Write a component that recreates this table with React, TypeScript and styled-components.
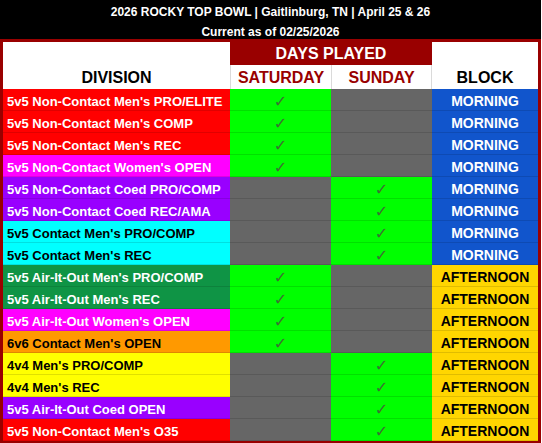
import styled, { createGlobalStyle } from 'styled-components'

const GlobalStyle = createGlobalStyle`
    body {
        margin: 0;
        background: #ffffff;
        font-family: 'Liberation Sans', Arial, sans-serif;
    }
`

type Day = 'sat' | 'sun'
type Block = 'MORNING' | 'AFTERNOON'

type Division = {
    name: string
    bg: string
    dark?: boolean
    day: Day
    block: Block
}

const RED = '#ff0000'
const MAGENTA = '#ff00ff'
const PURPLE = '#9900ff'
const CYAN = '#00ffff'
const GREEN = '#0f9445'
const ORANGE = '#ff9900'
const YELLOW = '#ffff00'

const divisions: Division[] = [
    { name: "5v5 Non-Contact Men's PRO/ELITE", bg: RED, day: 'sat', block: 'MORNING' },
    { name: "5v5 Non-Contact Men's COMP", bg: RED, day: 'sat', block: 'MORNING' },
    { name: "5v5 Non-Contact Men's REC", bg: RED, day: 'sat', block: 'MORNING' },
    { name: "5v5 Non-Contact Women's OPEN", bg: MAGENTA, day: 'sat', block: 'MORNING' },
    { name: '5v5 Non-Contact Coed PRO/COMP', bg: PURPLE, day: 'sun', block: 'MORNING' },
    { name: '5v5 Non-Contact Coed REC/AMA', bg: PURPLE, day: 'sun', block: 'MORNING' },
    { name: "5v5 Contact Men's PRO/COMP", bg: CYAN, dark: true, day: 'sun', block: 'MORNING' },
    { name: "5v5 Contact Men's REC", bg: CYAN, dark: true, day: 'sun', block: 'MORNING' },
    { name: "5v5 Air-It-Out Men's PRO/COMP", bg: GREEN, day: 'sat', block: 'AFTERNOON' },
    { name: "5v5 Air-It-Out Men's REC", bg: GREEN, day: 'sat', block: 'AFTERNOON' },
    { name: "5v5 Air-It-Out Women's OPEN", bg: MAGENTA, day: 'sat', block: 'AFTERNOON' },
    { name: "6v6 Contact Men's OPEN", bg: ORANGE, dark: true, day: 'sat', block: 'AFTERNOON' },
    { name: "4v4 Men's PRO/COMP", bg: YELLOW, dark: true, day: 'sun', block: 'AFTERNOON' },
    { name: "4v4 Men's REC", bg: YELLOW, dark: true, day: 'sun', block: 'AFTERNOON' },
    { name: '5v5 Air-It-Out Coed OPEN', bg: PURPLE, day: 'sun', block: 'AFTERNOON' },
    { name: "5v5 Non-Contact Men's O35", bg: RED, day: 'sun', block: 'AFTERNOON' },
]

export default function App() {
    return (
        <>
            <GlobalStyle />
            <Page>
                <Banner>
                    <BannerLine>2026 ROCKY TOP BOWL | Gaitlinburg, TN | April 25 &amp; 26</BannerLine>
                    <BannerLine>Current as of 02/25/2026</BannerLine>
                </Banner>

                <Table>
                    <SideHead>DIVISION</SideHead>
                    <DaysHead>DAYS PLAYED</DaysHead>
                    <SideHead>BLOCK</SideHead>
                    <DayHead>SATURDAY</DayHead>
                    <DayHead $right>SUNDAY</DayHead>

                    {divisions.map((d) => (
                        <Row key={d.name} division={d} />
                    ))}
                </Table>
            </Page>
        </>
    )
}

const Row = ({ division }: { division: Division }) => (
    <>
        <NameCell $bg={division.bg} $dark={division.dark}>
            {division.name}
        </NameCell>
        <DayCell $played={division.day === 'sat'}>{division.day === 'sat' && <Check>✓</Check>}</DayCell>
        <DayCell $played={division.day === 'sun'}>{division.day === 'sun' && <Check>✓</Check>}</DayCell>
        <BlockCell $afternoon={division.block === 'AFTERNOON'}>{division.block}</BlockCell>
    </>
)

const Page = styled.div`
    width: 542px;
    display: flex;
    flex-direction: column;
`

const Banner = styled.div`
    height: 39px;
    box-sizing: border-box;
    padding-top: 3px;
    background: #000000;
    display: flex;
    flex-direction: column;
    align-items: center;
    width: 541px;
    overflow: hidden;
`

const BannerLine = styled.div`
    line-height: 19.5px;
    font-size: 12px;
    font-weight: 700;
    color: #ffffff;
    white-space: nowrap;
`

const Table = styled.div`
    display: grid;
    grid-template-columns: 227px 101px 101px 106px;
    grid-template-rows: 23px 24px;
    grid-auto-rows: 22px;
    width: fit-content;
    border: 3px solid #990000;
    background: #ffffff;
`

const SideHead = styled.div`
    grid-row: span 2;
    align-self: end;
    box-sizing: border-box;
    height: 24px;
    padding-top: 2px;
    line-height: 22px;
    text-align: center;
    font-size: 16px;
    font-weight: 700;
    color: #000000;
`

const DaysHead = styled.div`
    grid-column: span 2;
    background: #990000;
    line-height: 23px;
    text-align: center;
    font-size: 16px;
    font-weight: 700;
    color: #ffffff;
`

const DayHead = styled.div<{ $right?: boolean }>`
    box-sizing: border-box;
    border-left: 1px solid #dadada;
    border-right: ${(p) => (p.$right ? '1px solid #dadada' : 'none')};
    padding-top: 2px;
    line-height: 22px;
    text-align: center;
    font-size: 16px;
    font-weight: 700;
    color: #990000;
`

const BaseCell = styled.div`
    box-sizing: border-box;
    padding-top: 3px;
    line-height: 19px;
    border-bottom: 1px solid rgba(0, 0, 0, 0.12);
    white-space: nowrap;
    overflow: hidden;
`

const NameCell = styled(BaseCell)<{ $bg: string; $dark?: boolean }>`
    padding-left: 4px;
    background: ${(p) => p.$bg};
    color: ${(p) => (p.$dark ? '#000000' : '#ffffff')};
    font-size: 13px;
    font-weight: 700;
`

const DayCell = styled(BaseCell)<{ $played: boolean }>`
    background: ${(p) => (p.$played ? '#00ff00' : '#666666')};
    text-align: center;
`

const Check = styled.span`
    font-family: 'DejaVu Sans', sans-serif;
    font-size: 16px;
    color: #3d6f33;
`

const BlockCell = styled(BaseCell)<{ $afternoon: boolean }>`
    background: ${(p) => (p.$afternoon ? '#ffd600' : '#1155cc')};
    color: ${(p) => (p.$afternoon ? '#000000' : '#ffffff')};
    text-align: center;
    font-size: 14px;
    font-weight: 700;
`
